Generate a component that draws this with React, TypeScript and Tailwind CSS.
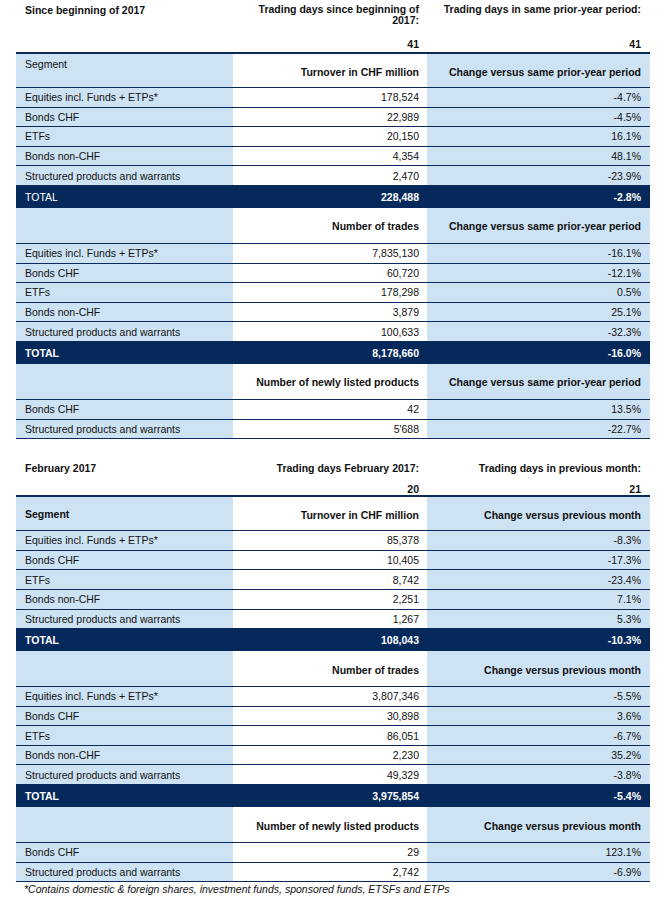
import React from "react";

type Row = [string, string, string];

const cols = "grid grid-cols-[217px_194px_223px]";

const DataRow = ({ row }: { row: Row }) => (
  <div className={`${cols} h-[19.6px] border-b border-[#0b2a57]`}>
    <div className="flex items-center bg-[#cde3f4] pl-[9px]">{row[0]}</div>
    <div className="flex items-center justify-end bg-white pr-[8px]">{row[1]}</div>
    <div className="flex items-center justify-end bg-[#cde3f4] pr-[9px]">{row[2]}</div>
  </div>
);

const TotalRow = ({ row, boldLabel }: { row: Row; boldLabel?: boolean }) => (
  <div className={`${cols} h-[22px] bg-[#05295a] text-white`}>
    <div className={`flex items-center pl-[9px] ${boldLabel ? "font-bold" : ""}`}>{row[0]}</div>
    <div className="flex items-center justify-end pr-[8px] font-bold">{row[1]}</div>
    <div className="flex items-center justify-end pr-[9px] font-bold">{row[2]}</div>
  </div>
);

interface HeadProps {
  label?: string;
  mid: string;
  right: string;
  first?: boolean;
  boldLabel?: boolean;
}

const HeadRow = ({ label, mid, right, first, boldLabel }: HeadProps) => (
  <div
    className={`${cols} h-[36px] border-b border-[#0b2a57] ${first ? "border-t-2" : ""}`}
  >
    <div
      className={`flex bg-[#cde3f4] pl-[9px] ${
        boldLabel ? "items-center font-bold" : "items-start pt-[4px]"
      }`}
    >
      {label}
    </div>
    <div className="flex items-center justify-end bg-white pr-[8px] pt-[2px] font-bold">{mid}</div>
    <div className="flex items-center justify-end bg-[#cde3f4] pr-[9px] pt-[2px] font-bold">{right}</div>
  </div>
);

const t1turnover: Row[] = [
  ["Equities incl. Funds + ETPs*", "178,524", "-4.7%"],
  ["Bonds CHF", "22,989", "-4.5%"],
  ["ETFs", "20,150", "16.1%"],
  ["Bonds non-CHF", "4,354", "48.1%"],
  ["Structured products and warrants", "2,470", "-23.9%"],
];
const t1trades: Row[] = [
  ["Equities incl. Funds + ETPs*", "7,835,130", "-16.1%"],
  ["Bonds CHF", "60,720", "-12.1%"],
  ["ETFs", "178,298", "0.5%"],
  ["Bonds non-CHF", "3,879", "25.1%"],
  ["Structured products and warrants", "100,633", "-32.3%"],
];
const t1listed: Row[] = [
  ["Bonds CHF", "42", "13.5%"],
  ["Structured products and warrants", "5'688", "-22.7%"],
];

const t2turnover: Row[] = [
  ["Equities incl. Funds + ETPs*", "85,378", "-8.3%"],
  ["Bonds CHF", "10,405", "-17.3%"],
  ["ETFs", "8,742", "-23.4%"],
  ["Bonds non-CHF", "2,251", "7.1%"],
  ["Structured products and warrants", "1,267", "5.3%"],
];
const t2trades: Row[] = [
  ["Equities incl. Funds + ETPs*", "3,807,346", "-5.5%"],
  ["Bonds CHF", "30,898", "3.6%"],
  ["ETFs", "86,051", "-6.7%"],
  ["Bonds non-CHF", "2,230", "35.2%"],
  ["Structured products and warrants", "49,329", "-3.8%"],
];
const t2listed: Row[] = [
  ["Bonds CHF", "29", "123.1%"],
  ["Structured products and warrants", "2,742", "-6.9%"],
];

export default function App() {
  const prior = "Change versus same prior-year period";
  const prev = "Change versus previous month";
  return (
    <div
      className="w-[666px] h-[903px] bg-white px-[16px] text-[10.5px] leading-[12px] text-[#111]"
      style={{ fontFamily: '"Liberation Sans", Arial, sans-serif' }}
    >
      {/* since beginning of year */}
      <div className={`${cols} h-[52px] pt-[4px] font-bold`}>
        <div className="pl-[9px]">Since beginning of 2017</div>
        <div className="flex flex-col items-end pr-[8px] text-right">
          <div className="h-[34px] leading-[11px]">Trading days since beginning of 2017:</div>
          <div>41</div>
        </div>
        <div className="flex flex-col items-end pr-[9px] text-right">
          <div className="h-[34px] leading-[11px]">Trading days in same prior-year period:</div>
          <div>41</div>
        </div>
      </div>
      <HeadRow first label="Segment" mid="Turnover in CHF million" right={prior} />
      {t1turnover.map((r) => (
        <DataRow key={r[0]} row={r} />
      ))}
      <TotalRow row={["TOTAL", "228,488", "-2.8%"]} />
      <HeadRow mid="Number of trades" right={prior} />
      {t1trades.map((r) => (
        <DataRow key={r[0]} row={r} />
      ))}
      <TotalRow boldLabel row={["TOTAL", "8,178,660", "-16.0%"]} />
      <HeadRow mid="Number of newly listed products" right={prior} />
      {t1listed.map((r) => (
        <DataRow key={r[0]} row={r} />
      ))}

      {/* february */}
      <div className={`${cols} h-[56px] pt-[23px] font-bold`}>
        <div className="pl-[9px]">February 2017</div>
        <div className="flex flex-col items-end pr-[8px] text-right">
          <div className="h-[21px]">Trading days February 2017:</div>
          <div>20</div>
        </div>
        <div className="flex flex-col items-end pr-[9px] text-right">
          <div className="h-[21px]">Trading days in previous month:</div>
          <div>21</div>
        </div>
      </div>
      <HeadRow first boldLabel label="Segment" mid="Turnover in CHF million" right={prev} />
      {t2turnover.map((r) => (
        <DataRow key={r[0]} row={r} />
      ))}
      <TotalRow boldLabel row={["TOTAL", "108,043", "-10.3%"]} />
      <HeadRow mid="Number of trades" right={prev} />
      {t2trades.map((r) => (
        <DataRow key={r[0]} row={r} />
      ))}
      <TotalRow boldLabel row={["TOTAL", "3,975,854", "-5.4%"]} />
      <HeadRow mid="Number of newly listed products" right={prev} />
      {t2listed.map((r) => (
        <DataRow key={r[0]} row={r} />
      ))}
      <p className="pl-[8px] pt-[1px] italic">
        *Contains domestic &amp; foreign shares, investment funds, sponsored funds, ETSFs and ETPs
      </p>
    </div>
  );
}
